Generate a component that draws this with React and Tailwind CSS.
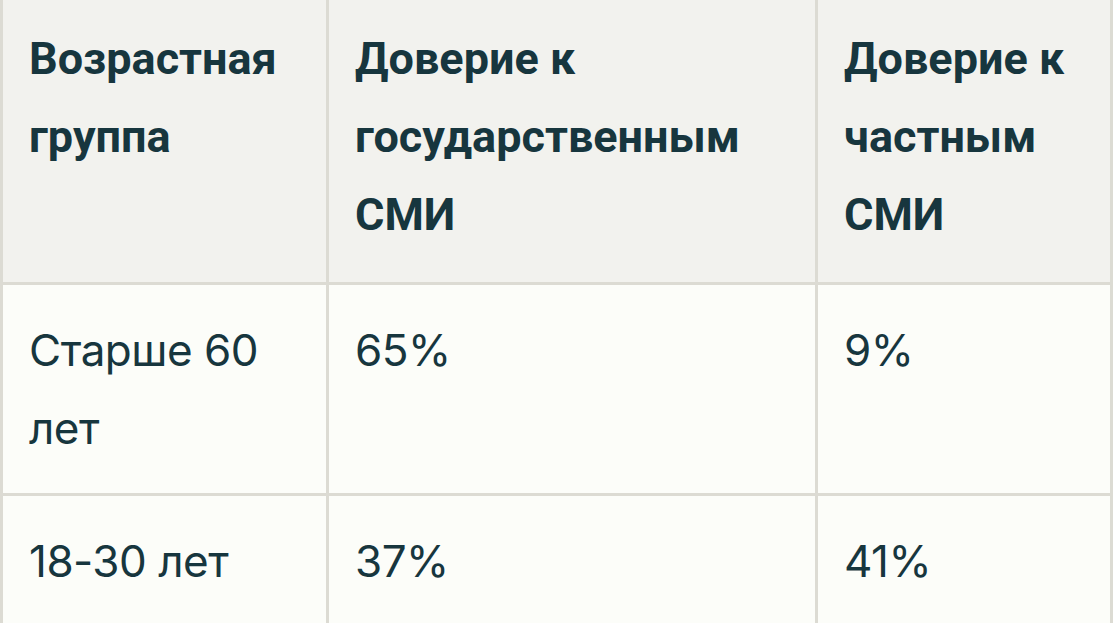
import React from 'react';

const head = ['Возрастная группа', 'Доверие к государственным СМИ', 'Доверие к частным СМИ'];
const rows = [
  ['Старше 60 лет', '65%', '9%'],
  ['18-30 лет', '37%', '41%'],
];

export default function App() {
  return (
    <div className="w-[1113px] h-[623px] overflow-hidden bg-[#fcfdf9]">
      <table className="w-[1113px] border-collapse table-fixed text-[#17363e]">
        <colgroup>
          <col className="w-[326px]" />
          <col className="w-[489px]" />
          <col />
        </colgroup>
        <thead>
          <tr className="bg-[#f2f2ee]">
            {head.map((h, i) => (
              <th
                key={i}
                className="border-[3px] border-t-0 border-[#dcdbd3] px-[26px] pt-[20px] pb-[28px] text-left align-top font-bold text-[45px] leading-[78px] font-['Roboto',sans-serif]"
              >
                {h}
              </th>
            ))}
          </tr>
        </thead>
        <tbody>
          {rows.map((r, i) => (
            <tr key={i}>
              {r.map((c, j) => (
                <td
                  key={j}
                  className="border-[3px] border-[#dcdbd3] px-[26px] py-[26px] align-top text-[44px] leading-[78px] font-['Inter',sans-serif] font-normal tracking-[-0.5px]"
                >
                  {c}
                </td>
              ))}
            </tr>
          ))}
        </tbody>
      </table>
    </div>
  );
}
